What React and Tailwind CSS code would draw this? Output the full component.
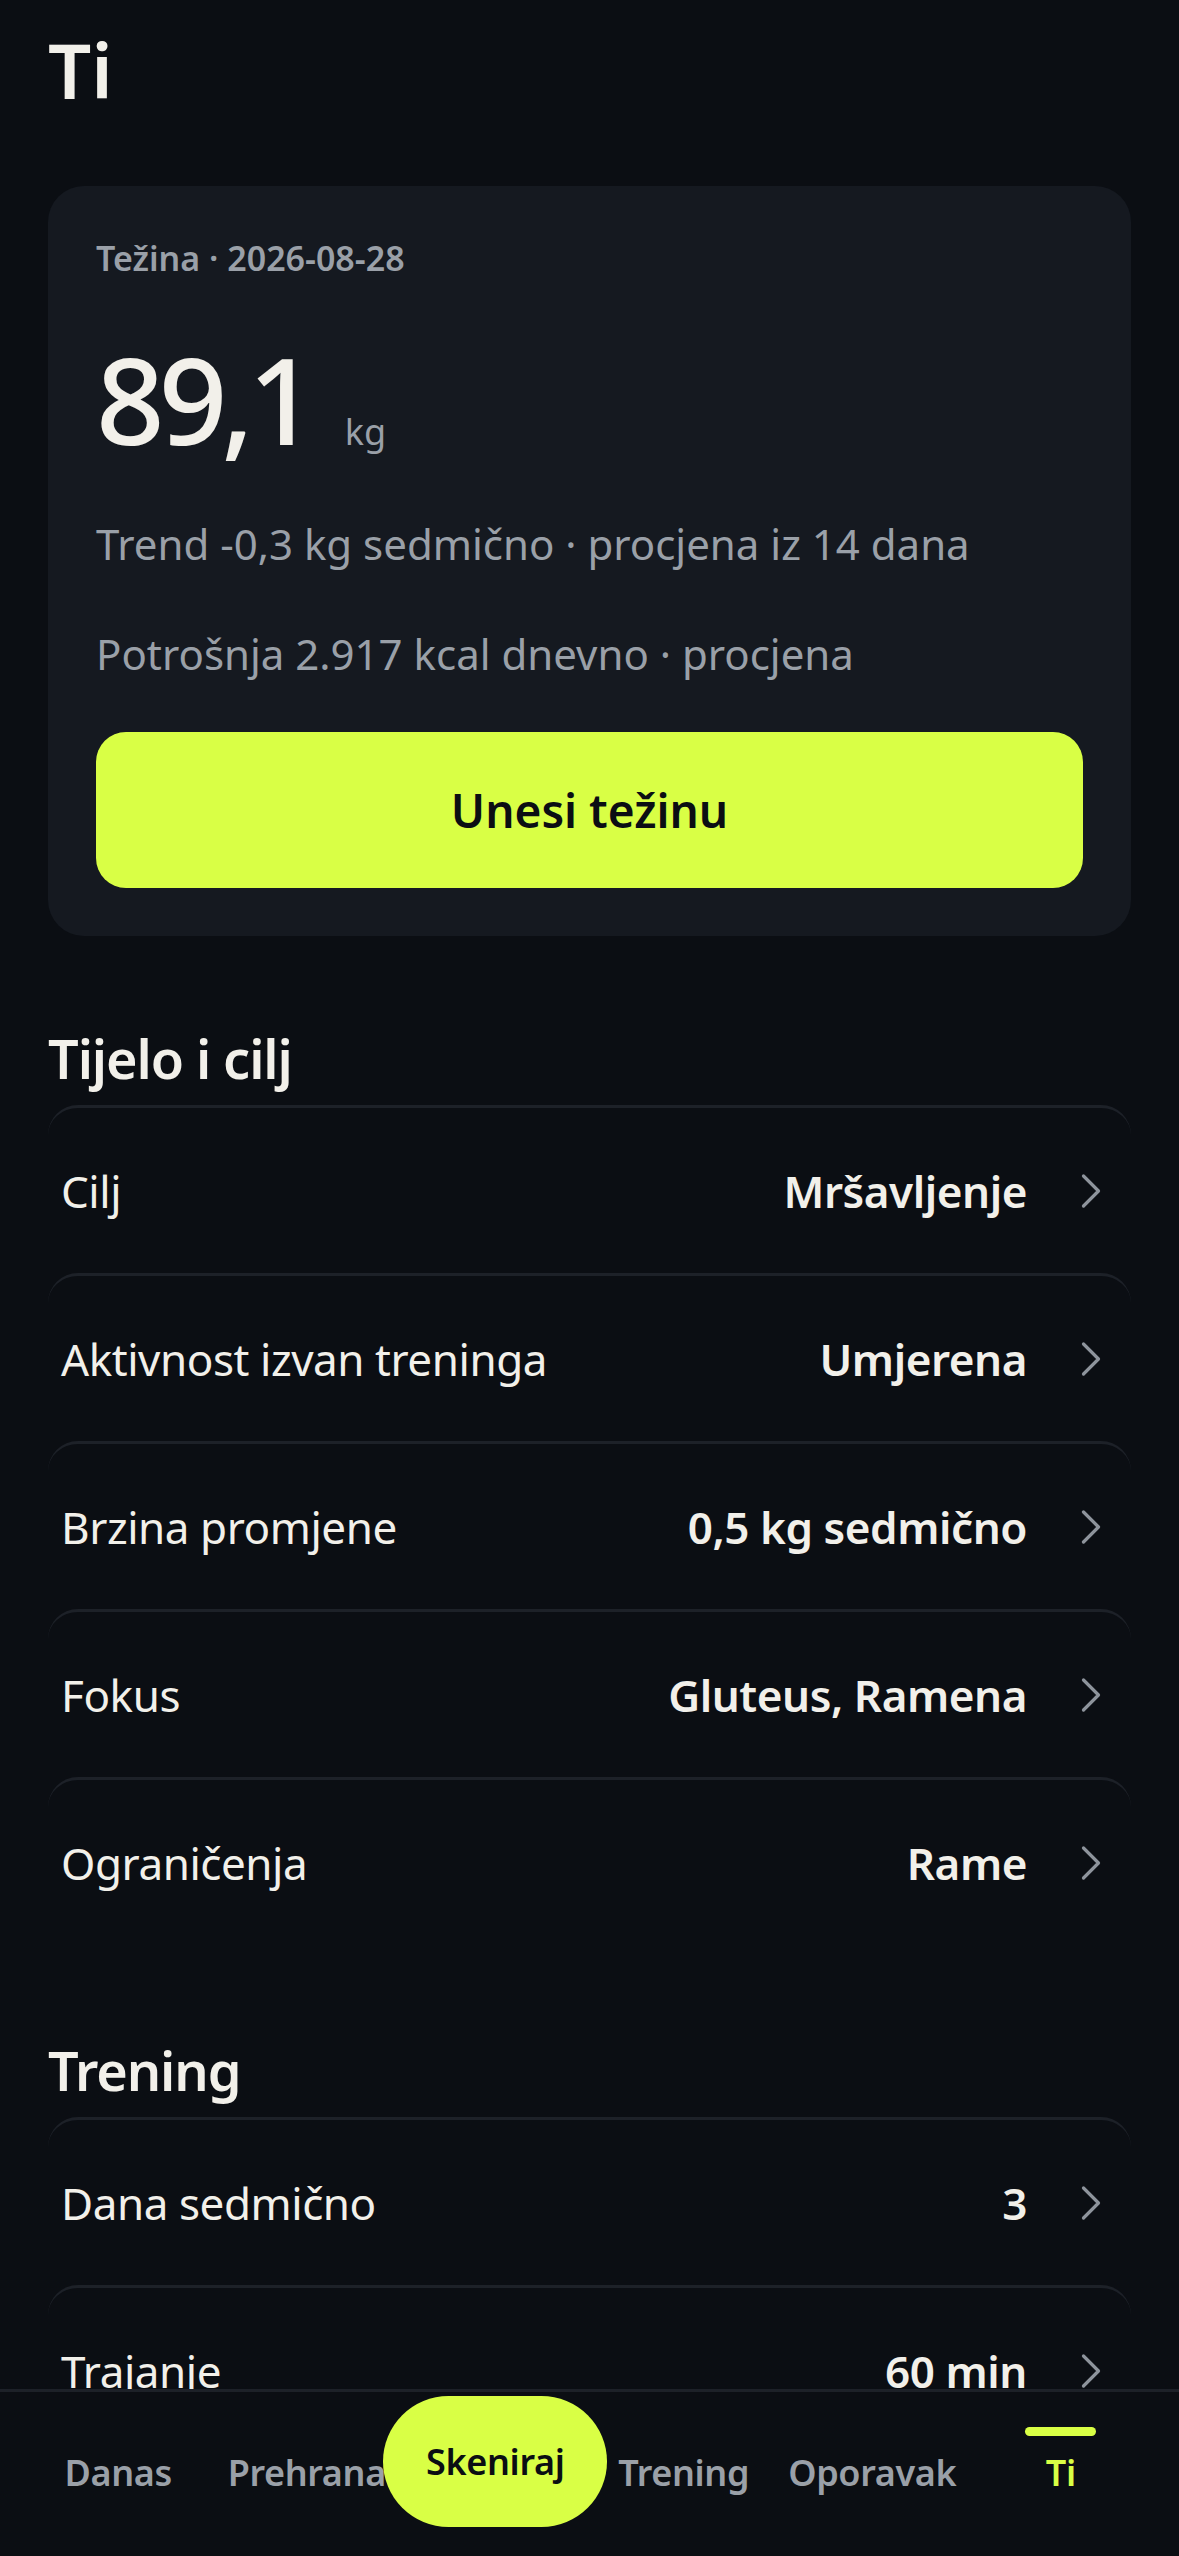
import { ChevronRight } from "lucide-react";

const body = [
  { label: "Cilj", value: "Mršavljenje" },
  { label: "Aktivnost izvan treninga", value: "Umjerena" },
  { label: "Brzina promjene", value: "0,5 kg sedmično" },
  { label: "Fokus", value: "Gluteus, Ramena" },
  { label: "Ograničenja", value: "Rame" },
];

const training = [
  { label: "Dana sedmično", value: "3" },
  { label: "Trajanje", value: "60 min" },
];

const tabs = ["Danas", "Prehrana", "Skeniraj", "Trening", "Oporavak", "Ti"];

function Row({ label, value }) {
  return (
    <div className="flex h-[168px] items-center rounded-[30px] border-t-[3px] border-[#1d2128] pl-[13px] pr-[10px]">
      <span className="flex-1 text-[44px] tracking-[-0.01em] text-[#f2f0ea]">{label}</span>
      <span className="text-[44px] font-semibold tracking-[-0.01em] text-[#f2f0ea]">{value}</span>
      <ChevronRight className="ml-[34px] h-[60px] w-[60px] text-[#8e949c]" strokeWidth={1.3} />
    </div>
  );
}

function Section({ title, rows }) {
  return (
    <div>
      <h2 className="text-[54px] font-semibold leading-[72px] tracking-[-0.02em] text-[#f2f0ea]">{title}</h2>
      <div className="mt-[11px]">
        {rows.map((r) => (
          <Row key={r.label} {...r} />
        ))}
      </div>
    </div>
  );
}

export default function App() {
  return (
    <div
      className="relative min-h-screen overflow-hidden bg-[#0b0e13] px-[48px] pt-[22px]"
      style={{ fontFamily: '"Noto Sans", "Open Sans", sans-serif' }}
    >
      <h1 className="text-[76px] font-semibold leading-[96px] text-[#f2f0ea]">Ti</h1>

      <div className="mt-[68px] rounded-[36px] bg-[#151920] p-[48px]">
        <p className="text-[34px] font-semibold leading-[48px] text-[#9aa0a8]">Težina · 2026-08-28</p>
        <div className="mt-[57px] flex items-baseline gap-[34px]">
          <span className="text-[120px] font-medium leading-[120px] tracking-[-6px] text-[#f2f0ea]">89,1</span>
          <span className="text-[36px] text-[#9aa0a8]">kg</span>
        </div>
        <p className="mt-[55px] text-[42px] leading-[60px] text-[#9aa0a8]">
          Trend -0,3 kg sedmično · procjena iz 14 dana
        </p>
        <p className="mt-[50px] text-[42px] leading-[60px] text-[#9aa0a8]">
          Potrošnja 2.917 kcal dnevno · procjena
        </p>
        <button className="mt-[48px] flex h-[156px] w-full items-center justify-center rounded-[30px] bg-[#d9ff45] text-[46px] font-semibold text-[#0b0e13]">
          Unesi težinu
        </button>
      </div>

      <div className="mt-[86px]">
        <Section title="Tijelo i cilj" rows={body} />
      </div>
      <div className="mt-[89px]">
        <Section title="Trening" rows={training} />
      </div>

      <nav className="fixed inset-x-0 bottom-0 h-[167px] border-t-[3px] border-[#1d2128] bg-[#0b0e13] px-[24px]">
        <div className="grid h-full grid-cols-6">
          {tabs.map((t) =>
            t === "Skeniraj" ? (
              <div key={t} className="flex justify-center pt-[4px]">
                <div className="flex h-[131px] w-[224px] shrink-0 items-center justify-center rounded-full bg-[#d9ff45] text-[36px] font-semibold tracking-[-0.01em] text-[#0b0e13]">
                  {t}
                </div>
              </div>
            ) : (
              <div key={t} className="flex flex-col items-center pt-[35px]">
                <div className={`h-[9px] w-[71px] rounded-full ${t === "Ti" ? "bg-[#d9ff45]" : "bg-transparent"}`} />
                <span
                  className={`mt-[15px] text-[36px] font-semibold leading-[44px] tracking-[-0.01em] ${
                    t === "Ti" ? "text-[#d9ff45]" : "text-[#9aa0a8]"
                  }`}
                >
                  {t}
                </span>
              </div>
            )
          )}
        </div>
      </nav>
    </div>
  );
}
